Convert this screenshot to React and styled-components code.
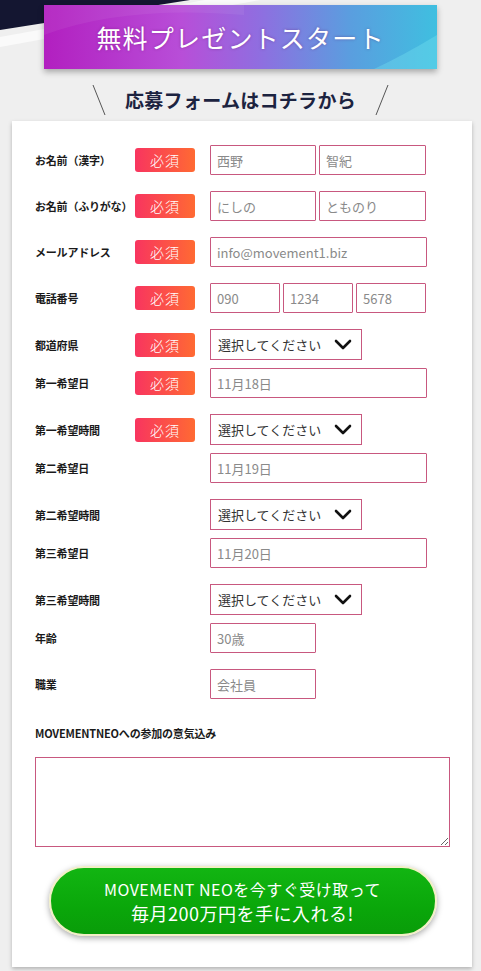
import React from "react";
import styled, { createGlobalStyle } from "styled-components";

const Global = createGlobalStyle`
  html, body { margin: 0; padding: 0; }
  body {
    background: #efefef;
    font-family: "Noto Sans CJK JP", "Noto Sans", sans-serif;
    color: #222;
  }
  * { box-sizing: border-box; }
`;

const Page = styled.div`
  width: 481px;
  min-height: 971px;
  position: relative;
  overflow: hidden;
  padding-top: 5px;
`;

const Deco = styled.svg`
  position: absolute;
  left: 0;
  top: 0;
  width: 260px;
  height: 50px;
`;

const Banner = styled.div`
  position: relative;
  margin: 0 44px;
  height: 64px;
  background: linear-gradient(90deg, #b21fc0 0%, #b84ed8 35%, #8f6ee0 55%, #5a9edf 78%, #3fbfe0 100%);
  box-shadow: 0 3px 6px rgba(0, 0, 0, 0.3);
  display: flex;
  align-items: center;
  justify-content: center;
  overflow: hidden;
`;

const BannerShine = styled.svg`
  position: absolute;
  inset: 0;
  width: 100%;
  height: 100%;
`;

const BannerText = styled.h1`
  position: relative;
  margin: 0;
  font-family: "Noto Sans CJK JP", sans-serif;
  font-weight: 400;
  font-size: 25px;
  letter-spacing: 1.2px;
  color: #fff;
  text-shadow: 0 0 3px rgba(90, 0, 90, 0.4);
`;

const SubHead = styled.div`
  display: flex;
  align-items: center;
  justify-content: center;
  gap: 18px;
  height: 44px;
  margin-top: 8px;
`;

const Slash = styled.svg`
  width: 16px;
  height: 32px;
  margin-top: 2px;
`;

const SubTitle = styled.h2`
  margin: 0;
  font-size: 19px;
  font-weight: 700;
  color: #1c2340;
  letter-spacing: 0.3px;
`;

const Card = styled.form`
  margin: 0 9px 0 12px;
  background: #fff;
  box-shadow: 0 2px 4px rgba(0, 0, 0, 0.25);
  padding: 24px 22px 31px 23px;
`;

const Row = styled.div`
  display: grid;
  grid-template-columns: 100px 75px 1fr;
  align-items: center;
  margin-bottom: ${(p) => (p.$last ? "0" : p.$tight ? "8px" : "16px")};
`;

const Label = styled.label`
  font-size: 11px;
  font-weight: 700;
  color: #1a1a1a;
  white-space: nowrap;
  letter-spacing: -0.2px;
`;

const Badge = styled.span`
  width: 60px;
  height: 24px;
  border-radius: 3px;
  background: linear-gradient(90deg, #f8355f 0%, #ff6a33 100%);
  color: #fff;
  font-size: 14px;
  font-weight: 300;
  display: flex;
  align-items: center;
  justify-content: center;
  letter-spacing: 1px;
`;

const Fields = styled.div`
  display: flex;
  gap: 3px;
`;

const Input = styled.input`
  width: ${(p) => p.$w}px;
  height: 30px;
  border: 1px solid #c8587f;
  border-radius: 1px;
  padding: 0 6px;
  font-family: "Noto Sans CJK JP", "Noto Sans", sans-serif;
  font-size: 13px;
  color: #333;
  background: #fff;
  outline: none;
  &::placeholder { color: #8a8a8a; }
`;

const SelectBox = styled.div`
  width: 152px;
  height: 31px;
  border: 1px solid #c8587f;
  display: flex;
  align-items: center;
  justify-content: space-between;
  padding: 0 9px 0 7px;
  font-size: 13px;
  color: #333;
`;

const TextLabel = styled.div`
  font-size: 11px;
  font-weight: 700;
  color: #1a1a1a;
  margin-top: 26px;
  letter-spacing: -0.2px;
`;

const TextArea = styled.textarea`
  display: block;
  width: 415px;
  height: 90px;
  margin-top: 16px;
  border: 1px solid #c8587f;
  outline: none;
  font-family: inherit;
`;

const Submit = styled.button`
  display: flex;
  flex-direction: column;
  align-items: center;
  justify-content: center;
  width: 388px;
  height: 70px;
  margin: 19px auto 0;
  border-radius: 35px;
  border: 2px solid #f2efc6;
  background: linear-gradient(180deg, #12b512 0%, #0aa70a 60%, #099c09 100%);
  box-shadow: 0 2px 6px rgba(0, 0, 0, 0.35);
  color: #fff;
  cursor: pointer;
  padding: 0;
`;

const BtnLine = styled.span`
  display: block;
  font-family: "Noto Sans CJK JP", sans-serif;
  font-size: ${(p) => p.$size}px;
  font-weight: 400;
  line-height: 24px;
  height: 24px;
  letter-spacing: 0.5px;
`;

const Chevron = () => (
  <svg width="18" height="12" viewBox="0 0 18 12">
    <path d="M2 2 L9 9 L16 2" fill="none" stroke="#111" strokeWidth="2.6" strokeLinecap="round" strokeLinejoin="round" />
  </svg>
);

const Select = () => (
  <SelectBox>
    <span>選択してください</span>
    <Chevron />
  </SelectBox>
);

const Required = () => <Badge>必須</Badge>;

export default function App() {
  return (
    <>
      <Global />
      <Page>
        <Deco viewBox="0 0 260 50">
          <polygon points="0,37 205,0 260,0 0,47" fill="#fafafa" />
          <polygon points="0,0 190,0 0,30" fill="#141631" />
        </Deco>
        <Banner>
          <BannerShine viewBox="0 0 393 64" preserveAspectRatio="none">
            <path d="M0 30 Q80 0 200 10 L200 0 L0 0 Z" fill="rgba(255,255,255,0.06)" />
            <path d="M393 30 Q360 50 330 64 L393 64 Z" fill="rgba(120,230,240,0.35)" />
          </BannerShine>
          <BannerText>無料プレゼントスタート</BannerText>
        </Banner>
        <SubHead>
          <Slash viewBox="0 0 16 32">
            <line x1="2" y1="1" x2="14" y2="31" stroke="#555" strokeWidth="1" />
          </Slash>
          <SubTitle>応募フォームはコチラから</SubTitle>
          <Slash viewBox="0 0 16 32">
            <line x1="14" y1="1" x2="2" y2="31" stroke="#555" strokeWidth="1" />
          </Slash>
        </SubHead>
        <Card onSubmit={(e) => e.preventDefault()}>
          <Row>
            <Label>お名前（漢字）</Label>
            <Required />
            <Fields>
              <Input $w={106} placeholder="西野" />
              <Input $w={107} placeholder="智紀" />
            </Fields>
          </Row>
          <Row>
            <Label>お名前（ふりがな）</Label>
            <Required />
            <Fields>
              <Input $w={106} placeholder="にしの" />
              <Input $w={107} placeholder="とものり" />
            </Fields>
          </Row>
          <Row>
            <Label>メールアドレス</Label>
            <Required />
            <Fields>
              <Input $w={217} placeholder="info@movement1.biz" />
            </Fields>
          </Row>
          <Row>
            <Label>電話番号</Label>
            <Required />
            <Fields>
              <Input $w={70} placeholder="090" />
              <Input $w={70} placeholder="1234" />
              <Input $w={70} placeholder="5678" />
            </Fields>
          </Row>
          <Row $tight>
            <Label>都道府県</Label>
            <Required />
            <Select />
          </Row>
          <Row>
            <Label>第一希望日</Label>
            <Required />
            <Fields>
              <Input $w={217} placeholder="11月18日" />
            </Fields>
          </Row>
          <Row $tight>
            <Label>第一希望時間</Label>
            <Required />
            <Select />
          </Row>
          <Row>
            <Label>第二希望日</Label>
            <span />
            <Fields>
              <Input $w={217} placeholder="11月19日" />
            </Fields>
          </Row>
          <Row $tight>
            <Label>第二希望時間</Label>
            <span />
            <Select />
          </Row>
          <Row>
            <Label>第三希望日</Label>
            <span />
            <Fields>
              <Input $w={217} placeholder="11月20日" />
            </Fields>
          </Row>
          <Row $tight>
            <Label>第三希望時間</Label>
            <span />
            <Select />
          </Row>
          <Row>
            <Label>年齢</Label>
            <span />
            <Fields>
              <Input $w={106} placeholder="30歳" />
            </Fields>
          </Row>
          <Row $last>
            <Label>職業</Label>
            <span />
            <Fields>
              <Input $w={106} placeholder="会社員" />
            </Fields>
          </Row>
          <TextLabel>MOVEMENTNEOへの参加の意気込み</TextLabel>
          <TextArea />
          <Submit type="submit">
            <BtnLine $size={16}>MOVEMENT NEOを今すぐ受け取って</BtnLine>
            <BtnLine $size={18}>毎月200万円を手に入れる!</BtnLine>
          </Submit>
        </Card>
      </Page>
    </>
  );
}
